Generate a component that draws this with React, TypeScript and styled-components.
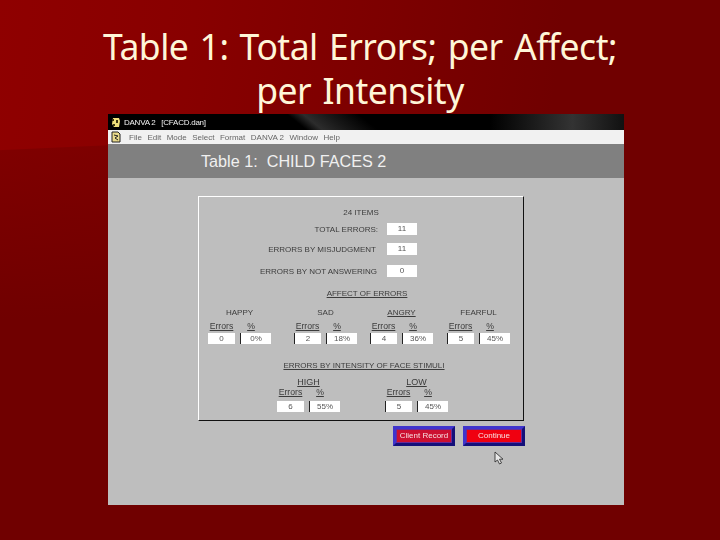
import React from "react";
import styled, { createGlobalStyle } from "styled-components";

const GlobalStyle = createGlobalStyle`
  html, body {
    margin: 0;
    padding: 0;
    background: #700000;
  }
`;

const Slide = styled.div`
  position: relative;
  width: 720px;
  height: 540px;
  overflow: hidden;
  padding-top: 24px;
  box-sizing: border-box;
  background:
    linear-gradient(177.4deg, rgba(112, 0, 0, 0) 0 149.5px, rgba(112, 0, 0, 0.5) 150.5px, #700000 320px),
    linear-gradient(97deg, #8f0000 0%, #880000 25%, #7c0000 50%, #700000 72%);
`;

const Title = styled.h1`
  margin: 0;
  height: 90px;
  font: 400 35.5px/44px "Noto Sans", "DejaVu Sans", sans-serif;
  letter-spacing: -0.5px;
  word-spacing: 2.5px;
  color: #fff6d8;
  text-align: center;
  white-space: nowrap;
`;

const Window = styled.div`
  width: 516px;
  height: 391px;
  margin-left: 108px;
  display: flex;
  flex-direction: column;
  background: #bebebe;
  font-family: "Liberation Sans", Arial, sans-serif;
`;

const TitleBar = styled.div`
  height: 16px;
  flex: none;
  display: flex;
  align-items: center;
  gap: 3px;
  padding-left: 3px;
  color: #f2f2f2;
  font-size: 8px;
  background:
    linear-gradient(39deg, transparent 125px, #2c2c2c 135px, #181818 150px, transparent 170px),
    linear-gradient(90deg, #000 0 74%, #333 90%, #111 100%);
`;

const TitleText = styled.span`
  white-space: pre;
  letter-spacing: -0.25px;
  filter: blur(0.25px);
`;

const MenuBar = styled.div`
  height: 14px;
  flex: none;
  display: flex;
  align-items: center;
  padding-left: 3px;
  background: #f1f1f1;
  font-size: 8px;
  color: #666;
`;

const MenuItems = styled.div`
  display: flex;
  gap: 5.5px;
  margin-left: 8px;
  filter: blur(0.35px);
`;

const Banner = styled.div`
  height: 34px;
  flex: none;
  display: flex;
  align-items: center;
  padding-left: 93px;
  background: #808080;
  color: #f0f0f0;
  font-size: 16.2px;
  white-space: pre;
`;

const Body = styled.div`
  flex: 1;
  padding: 18px 0 0 90px;
  color: #3c3c3c;
`;

const Panel = styled.div`
  box-sizing: border-box;
  width: 326px;
  height: 225px;
  padding-top: 11px;
  border: 1px solid;
  border-color: #fff #111 #111 #fff;
  font-size: 8px;
  filter: blur(0.35px);
`;

const Centered = styled.div`
  text-align: center;
  height: 10px;
  line-height: 10px;
`;

const SummaryRow = styled.div<{ $top: number; $gap: number }>`
  display: flex;
  justify-content: flex-end;
  align-items: center;
  height: 12px;
  margin-top: ${(p) => p.$top}px;
  padding-right: 106px;
  gap: ${(p) => p.$gap}px;
`;

const ValueBox = styled.div<{ $w?: number; $h?: number; $edge?: boolean }>`
  box-sizing: border-box;
  width: ${(p) => p.$w ?? 30}px;
  height: ${(p) => p.$h ?? 12}px;
  line-height: ${(p) => p.$h ?? 12}px;
  flex: none;
  text-align: center;
  background: #fff;
  color: #555;
  border-left: ${(p) => (p.$edge ? "1px solid #222" : "none")};
`;

const Heading = styled(Centered)<{ $top: number; $shift?: number }>`
  margin-top: ${(p) => p.$top}px;
  text-decoration: underline;
  transform: translateX(${(p) => p.$shift ?? 0}px);
`;

const AffectGrid = styled.div`
  display: grid;
  grid-template-columns: 86px 76px 77px 63px;
  margin: 9px 0 0 9px;
`;

const IntensityGrid = styled.div`
  display: grid;
  grid-template-columns: 108px 63px;
  margin: 6px 0 0 78px;
`;

const Group = styled.div`
  width: 63px;
  text-align: center;
`;

const GroupName = styled.div<{ $under?: boolean; $big?: boolean }>`
  height: 10px;
  line-height: 10px;
  font-size: ${(p) => (p.$big ? 9 : 8)}px;
  text-decoration: ${(p) => (p.$under ? "underline" : "none")};
`;

const ColumnHeads = styled.div<{ $top: number }>`
  display: flex;
  height: 10px;
  line-height: 10px;
  margin-top: ${(p) => p.$top}px;
  font-size: 8.7px;
  text-decoration: underline;
`;

const ColumnHead = styled.span<{ $w: number }>`
  width: ${(p) => p.$w}px;
  text-align: center;
`;

const Boxes = styled.div<{ $top: number }>`
  display: flex;
  gap: 5px;
  margin-top: ${(p) => p.$top}px;
`;

const Actions = styled.div`
  display: flex;
  gap: 8px;
  width: 327px;
  justify-content: flex-end;
  margin-top: 5px;
`;

const ActionButton = styled.div<{ $dark?: boolean }>`
  box-sizing: border-box;
  width: 62px;
  height: 20px;
  border: 3px solid;
  border-color: #3f34cc #14107a #14107a #3f34cc;
  background: ${(p) => (p.$dark ? "#cc1030" : "#f00010")};
  box-shadow: inset 0 0 0 1px #6a2a98;
  color: #f6e0e0;
  font-size: 8px;
  line-height: 14px;
  text-align: center;
  filter: blur(0.25px);
`;

const Pointer = styled.svg`
  position: absolute;
  left: 494px;
  top: 451px;
`;

const affects = [
  { name: "HAPPY", errors: "0", pct: "0%", under: false, edge: false },
  { name: "SAD", errors: "2", pct: "18%", under: false, edge: true },
  { name: "ANGRY", errors: "4", pct: "36%", under: true, edge: true },
  { name: "FEARFUL", errors: "5", pct: "45%", under: false, edge: true },
];

const intensities = [
  { name: "HIGH", errors: "6", pct: "55%", edge: false },
  { name: "LOW", errors: "5", pct: "45%", edge: true },
];

const AppIcon = () => (
  <svg width="10" height="11" viewBox="0 0 10 11">
    <path d="M2 1h6l1 3-1 6H3L1 7z" fill="#efe07a" />
    <path d="M1 2h2v2H1zM5 3h2v3H5zM2 7h2v2H2z" fill="#3a3410" />
  </svg>
);

const DocIcon = () => (
  <svg width="10" height="12" viewBox="0 0 10 12">
    <path d="M1 1h6l2 2v8H1z" fill="#e8d98a" stroke="#222" />
    <path d="M3 4l4 1-3 2 3 2" fill="none" stroke="#222" />
  </svg>
);

type StatProps = {
  name: string;
  errors: string;
  pct: string;
  under?: boolean;
  edge: boolean;
  compact?: boolean;
};

const StatGroup = ({ name, errors, pct, under, edge, compact }: StatProps) => (
  <Group>
    <GroupName $under={under} $big={compact}>{name}</GroupName>
    <ColumnHeads $top={compact ? 0 : 3}>
      <ColumnHead $w={27}>Errors</ColumnHead>
      <ColumnHead $w={32}>%</ColumnHead>
    </ColumnHeads>
    <Boxes $top={compact ? 4 : 2}>
      <ValueBox $w={27} $h={11} $edge={edge}>{errors}</ValueBox>
      <ValueBox $w={31} $h={11} $edge>{pct}</ValueBox>
    </Boxes>
  </Group>
);

const App = () => (
  <Slide>
    <GlobalStyle />
    <Title>
      Table 1: Total Errors; per Affect;
      <br />
      per Intensity
    </Title>
    <Window>
      <TitleBar>
        <AppIcon />
        <TitleText>DANVA 2   [CFACD.dan]</TitleText>
      </TitleBar>
      <MenuBar>
        <DocIcon />
        <MenuItems>
          {["File", "Edit", "Mode", "Select", "Format", "DANVA 2", "Window", "Help"].map((m) => (
            <span key={m}>{m}</span>
          ))}
        </MenuItems>
      </MenuBar>
      <Banner>Table 1:  CHILD FACES 2</Banner>
      <Body>
        <Panel>
          <Centered>24 ITEMS</Centered>
          <SummaryRow $top={5} $gap={9}>
            TOTAL ERRORS:
            <ValueBox>11</ValueBox>
          </SummaryRow>
          <SummaryRow $top={8} $gap={11}>
            ERRORS BY MISJUDGMENT
            <ValueBox>11</ValueBox>
          </SummaryRow>
          <SummaryRow $top={10} $gap={10}>
            ERRORS BY NOT ANSWERING
            <ValueBox>0</ValueBox>
          </SummaryRow>
          <Heading $top={12} $shift={6}>AFFECT OF ERRORS</Heading>
          <AffectGrid>
            {affects.map((a) => (
              <StatGroup key={a.name} {...a} />
            ))}
          </AffectGrid>
          <Heading $top={17} $shift={3}>ERRORS BY INTENSITY OF FACE STIMULI</Heading>
          <IntensityGrid>
            {intensities.map((a) => (
              <StatGroup key={a.name} under compact {...a} />
            ))}
          </IntensityGrid>
        </Panel>
        <Actions>
          <ActionButton $dark>Client Record</ActionButton>
          <ActionButton>Continue</ActionButton>
        </Actions>
      </Body>
    </Window>
    <Pointer width="10" height="14" viewBox="0 0 10 14">
      <path d="M1 1v10l2.5-2 2 4 2-1-2-3.8H9z" fill="#e8e8e8" stroke="#222" strokeWidth="0.8" />
    </Pointer>
  </Slide>
);

export default App;
